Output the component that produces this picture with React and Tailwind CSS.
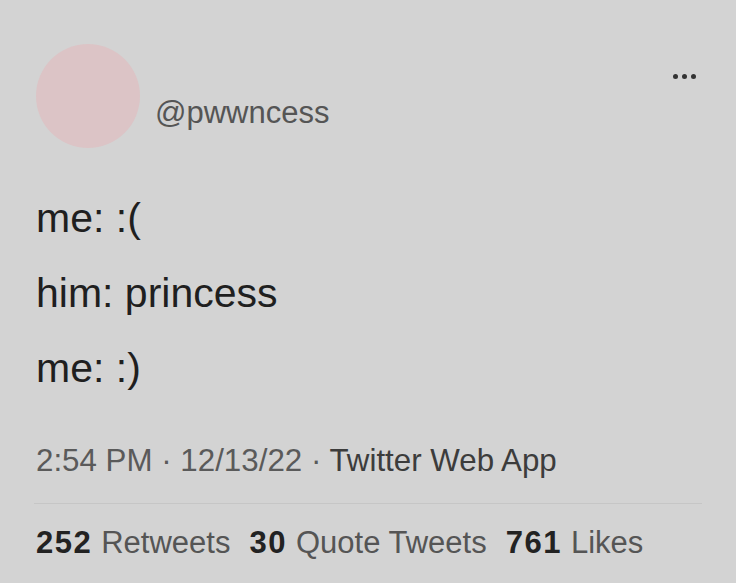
import React from 'react';

const font = { fontFamily: '"Liberation Sans", Arial, sans-serif' };

const Stat = ({ count, label }) => (
  <span className="flex items-baseline gap-[9px]">
    <span className="font-bold tracking-[1.5px] text-[#222222]">{count}</span>
    <span className="text-[#555555]">{label}</span>
  </span>
);

export default function App() {
  return (
    <div className="w-[736px] h-[583px] bg-[#d3d3d3] overflow-hidden" style={font}>
      <div className="pl-[36px] pr-[34px] pt-[44px]">
        {/* header */}
        <div className="flex items-start">
          <div className="size-[104px] rounded-full bg-[#dcc4c6] shrink-0" />
          <span className="ml-[15px] mt-[51px] text-[31px] leading-[36px] text-[#555555]">@pwwncess</span>
          <div className="ml-auto mt-[30px] mr-[6px] flex gap-[4px]">
            <span className="size-[5px] rounded-full bg-[#333333]" />
            <span className="size-[5px] rounded-full bg-[#333333]" />
            <span className="size-[5px] rounded-full bg-[#333333]" />
          </div>
        </div>

        {/* tweet body */}
        <div className="mt-[33px] text-[41px] leading-[75px] text-[#1f1f1f]">
          <p>me: :(</p>
          <p>him: princess</p>
          <p>me: :)</p>
        </div>

        {/* meta */}
        <div className="mt-[35px] text-[31.3px] leading-[40px] text-[#5a5a5a]">
          2:54 PM · 12/13/22 · <span className="text-[#3c3c3c]">Twitter Web App</span>
        </div>

        <div className="mt-[22px] h-px bg-[#c6c6c6] -ml-[2px]" />

        {/* stats */}
        <div className="mt-[19px] flex gap-[19px] text-[31px] leading-[40px]">
          <Stat count="252" label="Retweets" />
          <Stat count="30" label="Quote Tweets" />
          <Stat count="761" label="Likes" />
        </div>
      </div>
    </div>
  );
}
